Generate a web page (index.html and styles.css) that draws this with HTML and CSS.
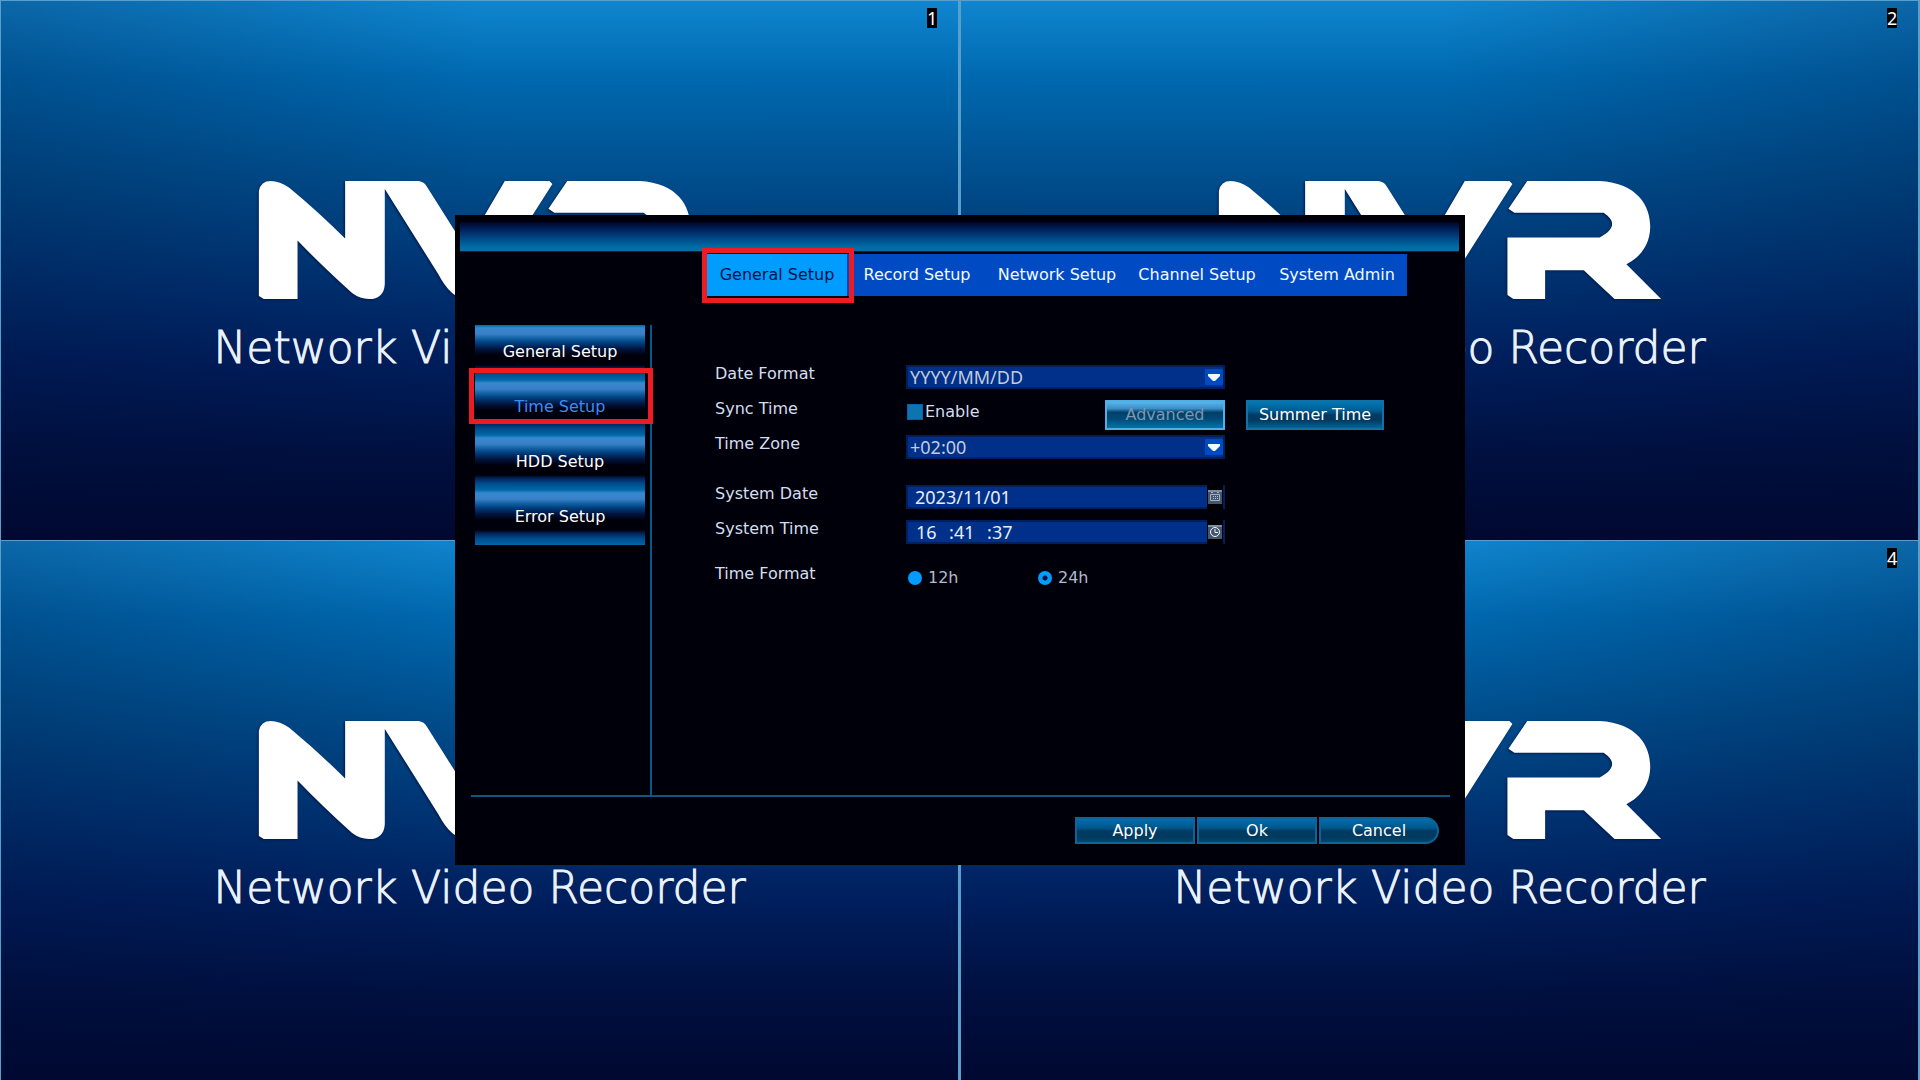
FILE: index.html
```html
<!DOCTYPE html>
<html lang="en">
<head>
<meta charset="utf-8">
<title>Network Video Recorder</title>
<link rel="stylesheet" href="styles.css">
</head>
<body>
<svg class="defs" aria-hidden="true">
  <symbol id="nvr" viewBox="0 0 446 120">
    <path d="M0 10Q2 0 12 0Q21 0 31 7Q60 31 87 58V0H161Q167 1 169 5L198 51Q207 65 213 65Q219 65 228 34L248 0H293L296 3L252 72L232 104Q224 119 210 119Q194 119 181 94L127 8V104Q126 119 111 119Q102 119 94 113Q62 84 39 60V119H5L0 116Z"/>
    <path d="M292 28L311 0H384C422 2 435 25 435 46C435 64 425 77 411 84L446 119H399L368 90H329V119H297L291 115V57H384C400 48 400 40 388 32H298Z"/>
  </symbol>
</svg>
<main class="screen">
  <section class="cam"><span class="num">1</span><svg class="logo"><use href="#nvr"/></svg><p class="name">Network Video Recorder</p></section>
  <section class="cam east"><span class="num">2</span><svg class="logo"><use href="#nvr"/></svg><p class="name">Network Video Recorder</p></section>
  <section class="cam"><span class="num">3</span><svg class="logo"><use href="#nvr"/></svg><p class="name">Network Video Recorder</p></section>
  <section class="cam east"><span class="num">4</span><svg class="logo"><use href="#nvr"/></svg><p class="name">Network Video Recorder</p></section>
</main>
<div class="overlay">
  <form class="dialog">
    <div class="titlebar"></div>
    <nav class="tabs">
      <button type="button" class="tab active marked">General Setup</button>
      <button type="button" class="tab">Record Setup</button>
      <button type="button" class="tab">Network Setup</button>
      <button type="button" class="tab">Channel Setup</button>
      <button type="button" class="tab">System Admin</button>
    </nav>
    <div class="content">
      <nav class="side">
        <button type="button" class="item">General Setup</button>
        <button type="button" class="item current marked">Time Setup</button>
        <button type="button" class="item">HDD Setup</button>
        <button type="button" class="item">Error Setup</button>
      </nav>
      <div class="fields">
        <div class="row">
          <label class="label" for="datefmt">Date Format</label>
          <div class="box"><select id="datefmt"><option>YYYY/MM/DD</option></select><svg class="arrow" viewBox="0 0 18 16"><path d="M3 5h12v2l-5 5h-2l-5-5z"/></svg></div>
        </div>
        <div class="row">
          <span class="label">Sync Time</span>
          <div class="sync">
            <label class="check"><input type="checkbox">Enable</label>
            <button type="button" class="btn advanced" disabled>Advanced</button>
          </div>
          <button type="button" class="btn summer">Summer Time</button>
        </div>
        <div class="row">
          <label class="label" for="zone">Time Zone</label>
          <div class="box"><select id="zone"><option>+02:00</option></select><svg class="arrow" viewBox="0 0 18 16"><path d="M3 5h12v2l-5 5h-2l-5-5z"/></svg></div>
        </div>
        <div class="row gap-date">
          <label class="label" for="sysdate">System Date</label>
          <div class="box entry"><input id="sysdate" class="value" type="text" value="2023/11/01">
            <button type="button" class="pick" aria-label="Pick date"><svg viewBox="0 0 14 14"><path class="face" d="M0 0h14v14H0z"/><path class="top" d="M0 0h14v2H0z"/><path class="line" d="M2.500 4.500h9v6h-9zM3 2.500h2M9 2.500h2"/><path class="dots" d="M5 6h1v1H5zM7 6h1v1H7zM9 6h1v1H9zM5 8h1v1H5zM7 8h1v1H7zM9 8h1v1H9z"/></svg></button>
          </div>
        </div>
        <div class="row">
          <label class="label" for="hour">System Time</label>
          <div class="box entry"><div class="clock"><input id="hour" type="text" value="16"><span>:</span><input type="text" value="41" aria-label="Minute"><span>:</span><input type="text" value="37" aria-label="Second"></div>
            <button type="button" class="pick" aria-label="Set time"><svg viewBox="0 0 14 14"><path class="face" d="M0 0h14v14H0z"/><path class="top" d="M0 0h14v2H0z"/><circle class="hand" cx="7" cy="7" r="4.500"/><path class="hand" d="M7 4v3.500h3"/></svg></button>
          </div>
        </div>
        <div class="row gap-format">
          <span class="label">Time Format</span>
          <div class="radios">
            <label class="radio"><input type="radio" name="fmt">12h</label>
            <label class="radio"><input type="radio" name="fmt" checked>24h</label>
          </div>
        </div>
      </div>
    </div>
    <footer class="actions">
      <button type="button" class="action">Apply</button>
      <button type="button" class="action">Ok</button>
      <button type="button" class="action last">Cancel</button>
    </footer>
  </form>
</div>
</body>
</html>
```
FILE: styles.css
```css
* { box-sizing: border-box; }
body {
  margin: 0;
  color: #d3def0;
  background: #000b35;
  font: 16px/20px "DejaVu Sans", Verdana, sans-serif;
}
button, input, select { margin: 0; padding: 0; border: 0; font: inherit; color: inherit; }
.defs { display: none; }

/* live view grid */
.screen {
  display: grid;
  grid-template-columns: 1fr 1fr;
  grid-auto-rows: 50vh;
  min-height: 100vh;
}
.cam {
  --shade-to: right;
  position: relative;
  display: flex;
  flex-direction: column;
  align-items: center;
  overflow: hidden;
  padding-top: 180px;
  border: 1px solid #5a9fcc;
  border-width: 1px 2px 0 1px;
  background:
    linear-gradient(to var(--shade-to), rgb(0 10 50 / 0.25), rgb(0 10 50 / 0) 50%),
    linear-gradient(#0f86cf 0, #0069b0 14%, #004f8e 32%, #003272 52%, #001f5e 66%, #001040 84%, #000830);
}
.east { --shade-to: left; }
.num {
  position: absolute;
  top: 7px;
  right: 21px;
  width: 10px;
  background: #000;
  color: #fff;
  font: 18px/20px "Noto Sans", sans-serif;
  text-align: center;
}
.logo { width: 446px; height: 119px; fill: #fff; filter: drop-shadow(-1px 1px 1px #001a4d); }
.name {
  margin: 24px 0 0;
  color: #e9f4ff;
  font: 200 44px/48px "DejaVu Sans", sans-serif;
  -webkit-text-stroke: 1px #e9f4ff;
  text-shadow: -1px 1px 1px #000b30;
  white-space: nowrap;
}

/* setup dialog */
.overlay {
  position: absolute;
  inset: 0;
  display: grid;
  place-items: center;
}
.dialog {
  width: min(1010px, 100%);
  padding: 6px 5px 20px 4px;
  background: #00000a;
  border: 1px solid #000;
}
.titlebar {
  height: 30px;
  background: linear-gradient(#000528, #00205a 25%, #004783 55%, #006ba6 85%, #0a6fa5);
  border-bottom: 1px solid #00204c;
}
.tabs { display: flex; width: 700px; margin: 2px 0 0 247px; background: #004bc4; }
.tab {
  position: relative;
  flex: 1 0 0;
  height: 42px;
  background: none;
  color: #f4faff;
  white-space: nowrap;
}
.tab.active { background: #009dff; color: #00104a; }
.marked::after { content: ""; position: absolute; border: 5px solid #ed1c24; }
.tab.marked::after { inset: -6px -7px -7px -5px; }
.content {
  display: flex;
  height: 501px;
  margin: 0 9px 0 11px;
  padding-top: 29px;
  border-bottom: 2px solid #0f5680;
}
.side {
  display: flex;
  flex-direction: column;
  width: 181px;
  padding: 0 5px 0 4px;
  border-right: 2px solid #045a8c;
}
.item {
  position: relative;
  height: 55px;
  padding-bottom: 2px;
  background: linear-gradient(#0068a6 0, #3688cf 3px, #3a80c8 9px, #1464a6 13px, #003d7c 18px, #00143f 24px, #00000c 30px, #00000a 40px, #002052 43px, #00488a 48px, #0068a6 55px);
  color: #fff;
}
.item.current { color: #3b8df5; }
.item.marked::after { inset: -12px -8px 11px -6px; }
.fields { flex: 1; padding: 40px 0 0 63px; }
.row { display: flex; height: 35px; }
.gap-date { margin-top: 15px; }
.gap-format { margin-top: 10px; }
.label { width: 191px; height: 20px; line-height: 18px; }
.box {
  display: flex;
  position: relative;
  width: 319px;
  height: 24px;
  background: #00308a;
  border: 2px solid #001f5c;
  font: 18px/20px "Noto Sans", sans-serif;
}
.box select {
  flex: 1;
  padding: 0 0 2px 2px;
  appearance: none;
  background: none;
  color: #c0ccdf;
}
.arrow { position: absolute; right: 0; top: 2px; width: 18px; height: 16px; background: #004bc4; fill: #f2f8ff; pointer-events: none; }
.entry { color: #e6eef8; }
.entry input { background: none; }
.value { flex: 1; width: 0; padding-left: 7px; }
.clock { display: flex; flex: 1; padding-left: 8px; }
.clock input { width: 33px; }
.clock span { width: 5px; }
.pick { width: 16px; height: 24px; margin: -2px 0; padding: 5px 1px; background: #000; }
.pick svg { display: block; width: 14px; height: 14px; }
.face { fill: #45566d; }
.top { fill: #7d8da2; }
.line { fill: none; stroke: #a3b2c4; }
.dots { fill: #b5c2d0; }
.hand { fill: none; stroke: #f2f6fa; }
.sync { display: flex; width: 319px; justify-content: space-between; }
.check { display: flex; align-items: center; gap: 2px; height: 24px; padding-left: 1px; }
.check input { width: 16px; height: 16px; appearance: none; background: #0c74ae; border: 1px solid #0062a8; }
.btn { height: 30px; color: #fff; background: linear-gradient(#0078b4, #005a91 35%, #003a60 50%, #003a60 70%, #00659a); border: 2px solid #1272a8; }
.advanced { width: 120px; color: #7f97ae; border-color: #4fb0e6; background: linear-gradient(#5ab4ea, #3a8fc6 25%, #003f68 40%, #004a78 65%, #0074aa); }
.summer { width: 138px; margin-left: 21px; }
.radios { display: flex; color: #b0bccd; }
.radio { display: flex; align-items: center; gap: 6px; width: 130px; height: 26px; }
.radio input { width: 14px; height: 14px; margin-left: 2px; appearance: none; border-radius: 50%; background: #009dff; }
.radio input:checked { background: radial-gradient(circle, #00103c 2px, #009dff 3px); }
.actions { display: flex; justify-content: flex-end; gap: 2px; padding: 20px 20px 0 0; }
.action {
  width: 120px;
  height: 27px;
  color: #fff;
  background: linear-gradient(#0070aa, #00558a 40%, #003a60 52%, #003a60 80%, #00486f);
  border: 2px solid #0c6598;
}
.last { border-radius: 0 14px 14px 0; }
```
